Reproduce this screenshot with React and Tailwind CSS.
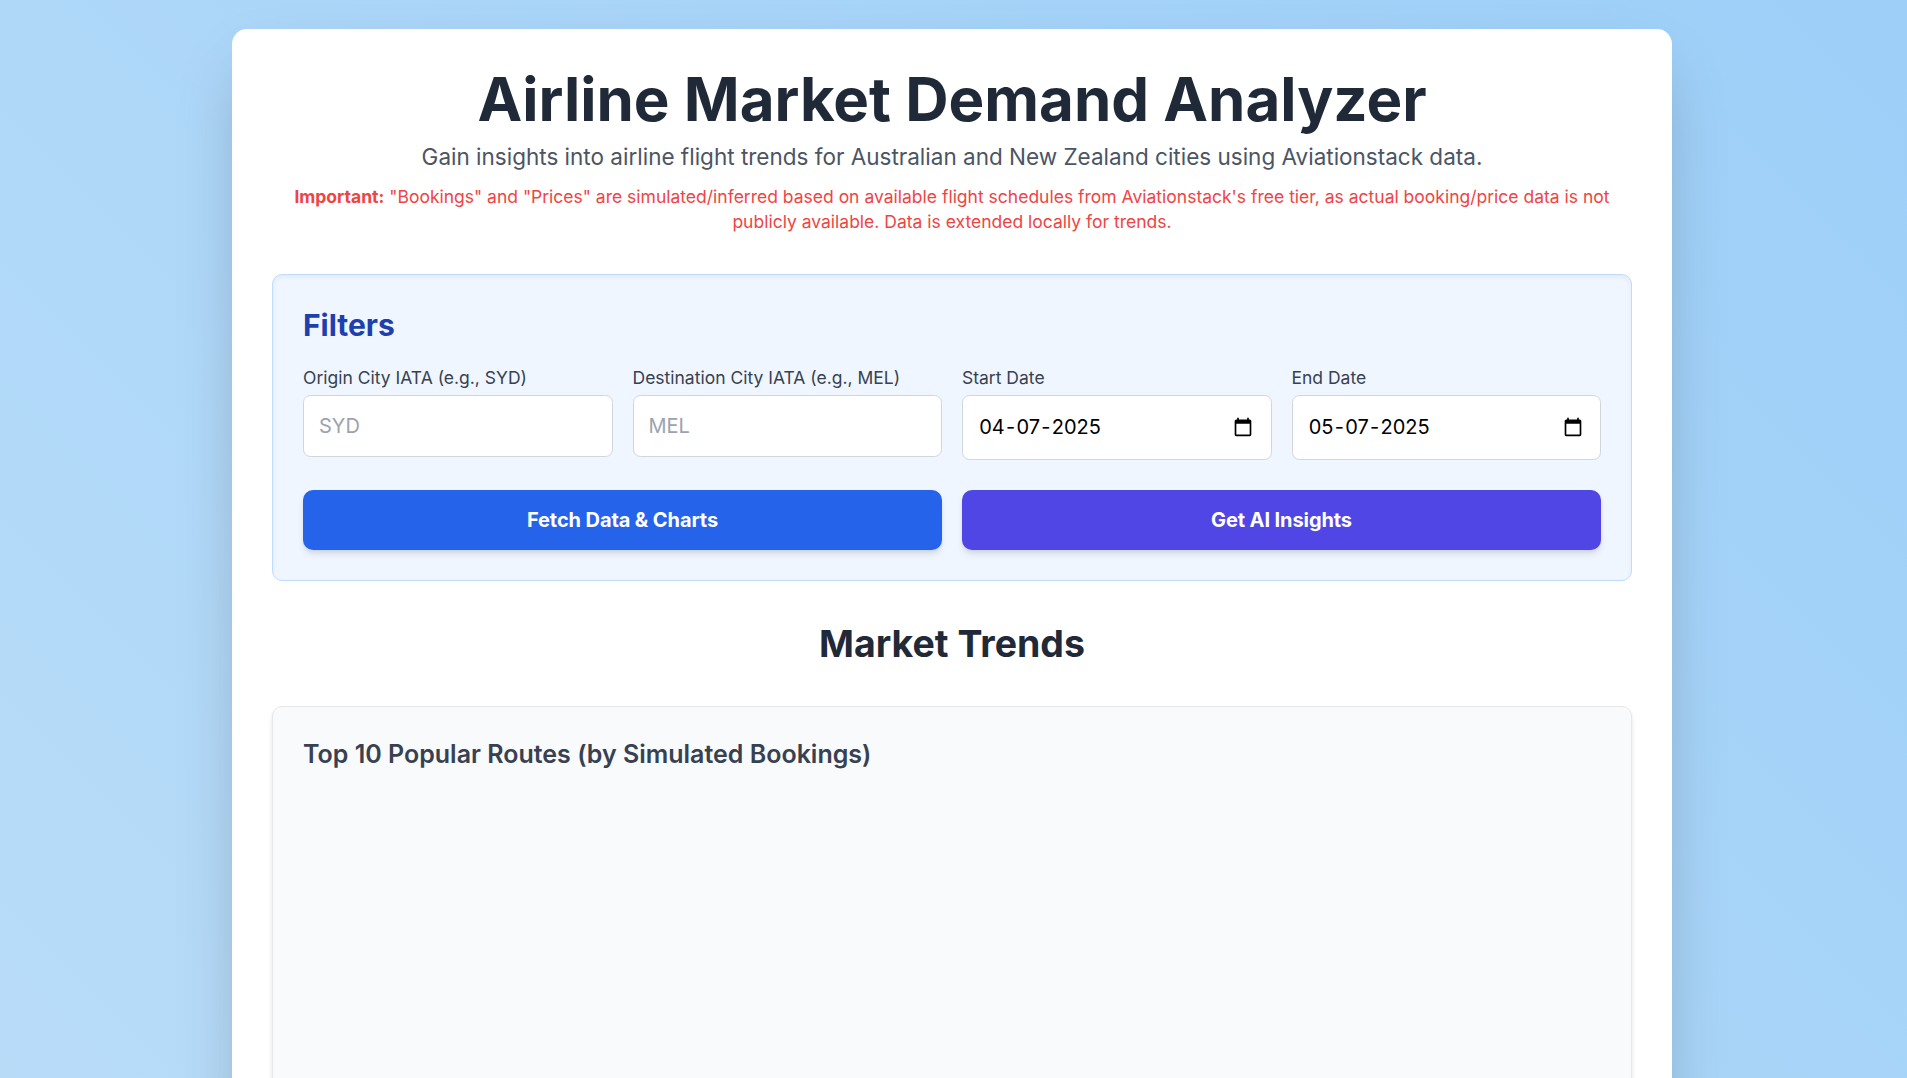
const fields = [
  { label: 'Origin City IATA (e.g., SYD)', type: 'text', placeholder: 'SYD' },
  { label: 'Destination City IATA (e.g., MEL)', type: 'text', placeholder: 'MEL' },
  { label: 'Start Date', type: 'date', value: ['04', '07', '2025'] },
  { label: 'End Date', type: 'date', value: ['05', '07', '2025'] },
];

function CalendarIcon() {
  return (
    <svg viewBox="0 0 24 24" className="size-5 fill-black" aria-hidden="true">
      <path d="M20 3h-1V1h-2v2H7V1H5v2H4c-1.100 0-2 .9-2 2v16c0 1.100.9 2 2 2h16c1.100 0 2-.9 2-2V5c0-1.100-.9-2-2-2zm0 18H4V8h16v13z" />
    </svg>
  );
}

function DateBox({ value: [day, month, year] }) {
  return (
    <span className="flex h-[65px] items-center justify-between rounded-[7.5px] border border-gray-300 bg-white pr-[17.5px] pb-0.5 pl-[15px] text-xl leading-[30px] text-black">
      <span>
        <span className="px-[1.25px]">{day}</span>-<span className="px-[1.25px]">{month}</span>-
        <span className="px-[1.25px]">{year}</span>
      </span>
      <CalendarIcon />
    </span>
  );
}

function Field({ label, type, placeholder, value }) {
  return (
    <label className="block">
      <span className="mb-[5px] block text-[17.5px] leading-[25px] text-[#374151]">{label}</span>
      {type === 'date' ? (
        <DateBox value={value} />
      ) : (
        <input
          type="text"
          placeholder={placeholder}
          className="block h-[62px] w-full rounded-[7.5px] border border-gray-300 bg-white px-[15px] text-xl leading-[30px] placeholder:text-[#9ca3af]"
        />
      )}
    </label>
  );
}

export default function App() {
  return (
    <div className="h-screen overflow-hidden bg-linear-45 from-[#b8dcf8] to-[#9dcff8] pt-[29px] pr-[3px] font-['Inter',sans-serif]">
      <main className="mx-auto h-[1400px] w-[1440px] rounded-[15px] bg-white p-10 shadow-[0_31px_62px_-15px_rgba(0,0,0,0.25)]">
        <header className="mb-10 text-center">
          <h1 className="mb-2.5 text-6xl leading-[60px] font-bold text-[#1f2937]">Airline Market Demand Analyzer</h1>
          <p className="text-[22.5px] leading-[35px] text-[#4b5563]">
            Gain insights into airline flight trends for Australian and New Zealand cities using Aviationstack data.
          </p>
          <p className="mt-2.5 text-[17.5px] leading-[25px] text-[#ef4444]">
            <strong className="font-bold">Important:</strong> "Bookings" and "Prices" are simulated/inferred based on
            available flight schedules from Aviationstack's free tier, as actual booking/price data is not publicly
            available. Data is extended locally for trends.
          </p>
        </header>

        <section className="rounded-[10px] border border-[#bfdbfe] bg-[#eff6ff] p-[30px] shadow-[inset_0_2.5px_5px_0_rgba(0,0,0,0.05)]">
          <h2 className="mb-5 text-3xl leading-10 font-bold text-[#1e40af]">Filters</h2>
          <div className="grid grid-cols-4 gap-5">
            {fields.map((field) => (
              <Field key={field.label} {...field} />
            ))}
          </div>
          <div className="mt-[30px] grid grid-cols-2 gap-5">
            <button className="h-[60px] rounded-[10px] bg-[#2563eb] text-xl font-bold tracking-[-0.1px] text-white shadow-[0_5px_7.5px_-1.25px_rgba(0,0,0,0.1),0_2.5px_5px_-2.5px_rgba(0,0,0,0.1)]">
              Fetch Data &amp; Charts
            </button>
            <button className="h-[60px] rounded-[10px] bg-[#4f46e5] text-xl font-bold tracking-[-0.1px] text-white shadow-[0_5px_7.5px_-1.25px_rgba(0,0,0,0.1),0_2.5px_5px_-2.5px_rgba(0,0,0,0.1)]">
              Get AI Insights
            </button>
          </div>
        </section>

        <h2 className="my-10 text-center text-[37.5px] leading-[45px] font-bold text-[#1f2937]">Market Trends</h2>

        <section className="h-[560px] rounded-[10px] border border-gray-200 bg-gray-50 p-[30px] shadow-[0_5px_7.5px_-1.25px_rgba(0,0,0,0.1),0_2.5px_5px_-2.5px_rgba(0,0,0,0.1)]">
          <h3 className="text-[25px] leading-[35px] font-semibold text-[#374151]">
            Top 10 Popular Routes (by Simulated Bookings)
          </h3>
        </section>
      </main>
    </div>
  );
}
